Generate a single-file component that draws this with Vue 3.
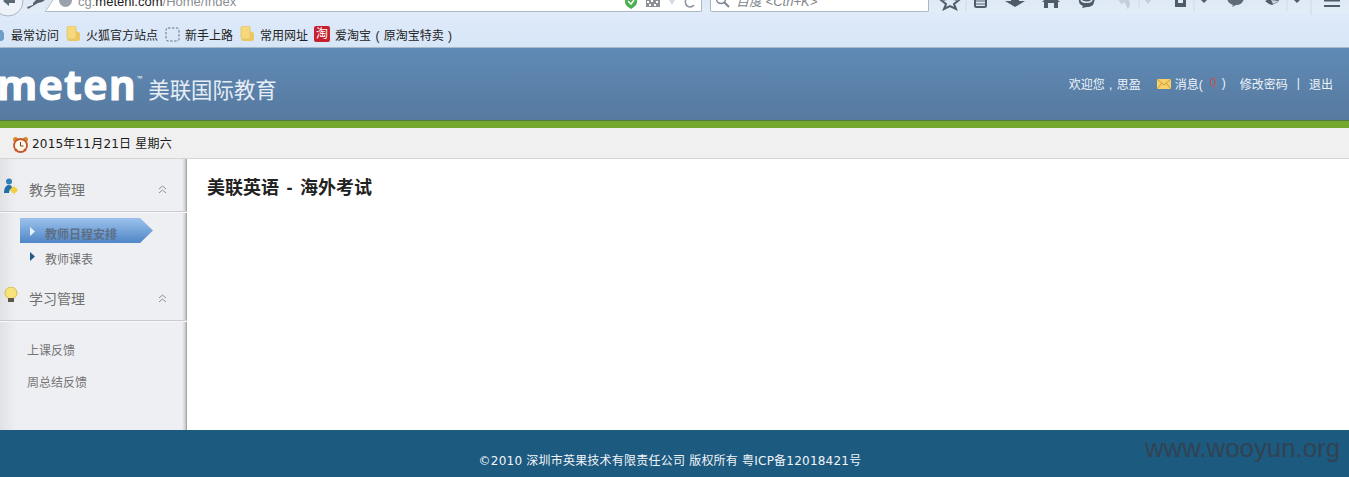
<script setup>
const bookmarks = [
  { label: '最常访问', icon: 'none' },
  { label: '火狐官方站点', icon: 'folder' },
  { label: '新手上路', icon: 'dash' },
  { label: '常用网址', icon: 'folder' },
  { label: '爱淘宝 ( 原淘宝特卖 )', icon: 'tao' }
]
</script>

<template>
  <div class="page">
    <div class="browser">
      <div class="navbar">
        <svg class="nav-back" width="60" height="20" viewBox="0 0 60 20">
          <path d="M45 0h8L45 12z" fill="#dfe9f5" />
          <path d="M53 0l-8 12" stroke="#b4c2d0" fill="none" />
          <circle cx="8" cy="1" r="15" fill="#eef3f9" stroke="#a8b6c5" />
          <path d="M3 1l6-5v3h6v4H9v3z" fill="#5c6a78" />
          <path d="M27 7l1 2 5-3 5-3 4-1 3-2h-9l-3 3v2z" fill="#59626c" />
        </svg>
        <div class="urlbar">
          <span class="globe"></span>
          <span class="url">cg.<b>meteni.com</b>/Home/Index</span>
          <svg class="url-icons" width="76" height="11" viewBox="0 0 76 11">
            <path d="M0 0h12v2c0 3-3 5-6 7-3-2-6-4-6-7z" fill="#4caf50" />
            <path d="M3 1l3 3 3-4" stroke="#fff" stroke-width="1.500" fill="none" />
            <rect x="21" y="0" width="14" height="7" fill="#8d9196" />
            <path d="M22 1h2v2h-2zM26 0h2v2h-2zM31 1h2v2h-2zM24 4h2v2h-2zM29 4h2v2h-2z" fill="#fff" />
            <path d="M44 0h6l-3 5z" fill="#d3d9e0" />
            <path d="M70 0a5 5 0 1 0-5 7 5 5 0 0 0 4-2" stroke="#8a949e" stroke-width="1.500" fill="none" />
          </svg>
        </div>
        <div class="searchbar">
          <svg width="14" height="8" viewBox="0 0 14 8">
            <circle cx="5" cy="-1" r="4.500" fill="none" stroke="#7b8794" stroke-width="1.500" />
            <path d="M8 2l5 5" stroke="#7b8794" stroke-width="2" />
          </svg>
          <span class="search-text">百度 &lt;Ctrl+K&gt;</span>
        </div>
        <svg class="tools" width="420" height="20" viewBox="0 0 420 20">
          <path d="M21 -8l3 7 6 1-5 4 2 5-6-3-6 3 2-5-5-4 6-1z" fill="none" stroke="#4f5b67" stroke-width="2" />
          <path d="M37 -3v14M210 -3v11M265 -3v14M358 -3v14" stroke="#d0dae5" />
          <path d="M382 -3v18" stroke="#cdd8e3" />
          <rect x="46" y="-4" width="11" height="11" rx="1.500" fill="none" stroke="#4f5b67" stroke-width="2" />
          <path d="M46 1h11M46 4h11" stroke="#4f5b67" />
          <path d="M82 -3h8v4h6l-10 6-10-6h6z" fill="#4f5b67" />
          <path d="M122 -6l9 8h-2v6h-4V3h-6v5h-4V2h-2z" fill="#4f5b67" />
          <path d="M150 1a8 7 0 1 1 15 1c0 3-3 5-7 5l-5 1 1-2c-3-1-4-3-4-5z" fill="#4f5b67" />
          <path d="M152 0c2 3 9 3 11 0" fill="none" stroke="#dbe7f5" stroke-width="1.500" />
          <path d="M188 -2l7-1c4 1 6 4 6 7 0 3-2 4-3 5 0-3-1-6-4-7l-1 3z" fill="#c3ced8" />
          <path d="M216 0h6l-3 4z" fill="#c3ced8" />
          <path d="M246 -2h3v5h5v-5h3v9h-11z" fill="#4f5b67" />
          <path d="M272 0h6l-3 3z" fill="#4f5b67" />
          <path d="M298 -3h17c0 5-3 8-8 8l-4 2 1-2c-3-1-6-3-6-8z" fill="#5f6b77" />
          <path d="M336 1l9-4 7-1-3 6-6 3-3-1z" fill="#4f5b67" />
          <path d="M342 0l8 1-6 3z" fill="#cbd4dc" />
          <path d="M365 0h6l-3 3z" fill="#4f5b67" />
          <path d="M395 0h16v1.500h-16zM395 5h16v2h-16z" fill="#4f5b67" />
        </svg>
      </div>
      <div class="bookmarks">
        <span v-for="b in bookmarks" :key="b.label" class="bm">
          <svg v-if="b.icon === 'none'" class="bm-icon first" width="4" height="16" viewBox="0 0 4 16">
            <path d="M-4 4h6l2 3v6l-2 2h-6z" fill="#6f9fc4" />
          </svg>
          <svg v-else-if="b.icon === 'folder'" class="bm-icon" width="15" height="16" viewBox="0 0 15 16">
            <path d="M1 2c0-1 1-2 2-2h6l1 1v12H3c-1 0-2-1-2-2z" fill="#f7d97c" stroke="#d8b657" stroke-width=".6" />
            <path d="M10 5l4 2v6c0 1-1 2-2 2H3c-1 0-2-1-2-2h9z" fill="#ecc760" />
          </svg>
          <svg v-else-if="b.icon === 'dash'" class="bm-icon" width="15" height="15" viewBox="0 0 15 15">
            <rect x="1" y="1" width="13" height="13" rx="2" fill="none" stroke="#67727e" stroke-dasharray="2.500 1.500" />
          </svg>
          <span v-else class="tao">淘</span>
          <span>{{ b.label }}</span>
        </span>
      </div>
    </div>

    <header class="header">
      <div class="brand">
        <span class="logo">meten<sup>™</sup></span>
        <span class="brand-cn">美联国际教育</span>
      </div>
      <div class="userbar">
        <span class="welcome">欢迎您 , 思盈</span>
        <span class="msg">
          <svg width="14" height="10" viewBox="0 0 14 10">
            <rect x="0" y="0" width="14" height="10" fill="#f7d067" />
            <path d="M0 0l7 6 7-6M0 10l5-6M14 10L9 4" fill="none" stroke="#c89a40" />
          </svg>
          <span class="msg-text">消息(</span><i class="count">0</i><span>)</span>
        </span>
        <span class="pwd">修改密码</span>
        <span class="sep">|</span>
        <span>退出</span>
      </div>
    </header>
    <div class="green"></div>

    <div class="datebar">
      <svg class="clock" width="17" height="17" viewBox="0 0 17 17">
        <circle cx="3.500" cy="3.500" r="2.500" fill="#d9892b" />
        <circle cx="13.500" cy="3.500" r="2.500" fill="#d9892b" />
        <circle cx="8.500" cy="9.500" r="6.500" fill="#fff6e8" stroke="#c5552c" stroke-width="1.800" />
        <path d="M8.500 6v4h3" fill="none" stroke="#6b4a2c" />
        <path d="M3 15l2-2M14 15l-2-2" stroke="#c5552c" stroke-width="1.500" />
      </svg>
      <span class="date-text">2015年11月21日 星期六</span>
    </div>

    <div class="body">
      <aside class="side">
        <div class="group-head">
          <svg class="gicon" width="16" height="17" viewBox="0 0 16 17">
            <circle cx="7" cy="3.500" r="3" fill="#2f80b8" />
            <path d="M2 15c0-5 2-8 5-8 2 0 3 1 3 3-2 1-3 3-3 5z" fill="#1f6ea8" />
            <circle cx="12" cy="12" r="3" fill="#f3cf3f" />
            <path d="M12 7.500v9M7.500 12h9" stroke="#f3cf3f" />
          </svg>
          <span class="gtitle">教务管理</span>
          <svg class="chev" width="9" height="9" viewBox="0 0 9 9">
            <path d="M1 4l3.500-3L8 4M1 8l3.500-3L8 8" fill="none" stroke="#8a9098" />
          </svg>
        </div>
        <div class="sub">
          <div class="item active">
            <svg class="tri" width="5" height="9" viewBox="0 0 5 9"><path d="M0 0l5 4.500L0 9z" fill="#e8f1fb" /></svg>
            <span>教师日程安排</span>
          </div>
          <div class="item">
            <svg class="tri" width="5" height="9" viewBox="0 0 5 9"><path d="M0 0l5 4.500L0 9z" fill="#1f5d86" /></svg>
            <span>教师课表</span>
          </div>
        </div>
        <div class="group-head">
          <svg class="gicon" width="16" height="17" viewBox="0 0 16 17">
            <circle cx="9" cy="6" r="6" fill="#f8e27a" stroke="#d9b84b" />
            <rect x="6" y="11" width="6" height="4" fill="#5d5548" />
          </svg>
          <span class="gtitle">学习管理</span>
          <svg class="chev" width="9" height="9" viewBox="0 0 9 9">
            <path d="M1 4l3.500-3L8 4M1 8l3.500-3L8 8" fill="none" stroke="#8a9098" />
          </svg>
        </div>
        <div class="plain">
          <div>上课反馈</div>
          <div>周总结反馈</div>
        </div>
      </aside>
      <main class="main">
        <h1>美联英语 - 海外考试</h1>
      </main>
    </div>

    <footer class="footer">
      <span class="copy">©2010 深圳市英果技术有限责任公司 版权所有 粤ICP备12018421号</span>
      <span class="mark">www.wooyun.org</span>
    </footer>
  </div>
</template>

<style>
html, body { margin: 0; padding: 0; background: #fff; overflow: hidden; }
</style>

<style scoped>
.page {
  width: 1349px;
  height: 477px;
  display: flex;
  flex-direction: column;
  overflow: hidden;
  font-family: "Liberation Sans", "Noto Sans CJK SC", sans-serif;
  font-size: 12px;
}
.browser {
  height: 48px;
  flex: none;
  background: #d9e7f7;
  border-bottom: 1px solid #a9b9cc;
  box-sizing: border-box;
  display: flex;
  flex-direction: column;
}
.navbar {
  height: 13px;
  flex: none;
  display: flex;
  align-items: flex-start;
  position: relative;
  z-index: 1;
  padding-left: 45px;
  background: linear-gradient(#dfe9f5, #e3edf8);
}
.nav-back { position: absolute; left: 0; top: 0; z-index: 2; }
.urlbar {
  width: 657px;
  height: 12px;
  flex: none;
  background: #fff;
  border: solid #a9b7c6;
  border-width: 0 1px 1px 0;
  border-radius: 0 0 2px 2px;
  display: flex;
  align-items: flex-end;
  padding-left: 14px;
  box-sizing: border-box;
  overflow: hidden;
}
.globe {
  width: 13px;
  height: 13px;
  border-radius: 50%;
  background: #9aa3ab;
  margin-bottom: 4px;
  flex: none;
}
.url {
  margin-left: 6px;
  font-size: 13px;
  line-height: 15px;
  margin-bottom: 2px;
  color: #8a8f95;
  white-space: nowrap;
}
.url b { font-weight: 400; color: #1c1c1c; }
.url-icons { margin-left: auto; flex: none; }
.searchbar {
  margin-left: 8px;
  width: 219px;
  height: 12px;
  flex: none;
  background: #fff;
  border: solid #a9b7c6;
  border-width: 0 1px 1px 1px;
  border-radius: 0 0 2px 2px;
  box-sizing: border-box;
  display: flex;
  align-items: flex-end;
  padding-left: 5px;
  overflow: hidden;
}
.searchbar svg { margin-bottom: 3px; flex: none; }
.search-text {
  margin-left: 6px;
  font-size: 13px;
  line-height: 14px;
  margin-bottom: 2px;
  font-style: italic;
  color: #7f8589;
  white-space: nowrap;
}
.tools { flex: none; overflow: visible; }
.bookmarks {
  flex: 1;
  display: flex;
  align-items: center;
  color: #222;
  font-size: 12px;
  background: linear-gradient(#dfeafa, #d7e6f7);
  padding-top: 8px;
}
.bm { display: flex; align-items: center; white-space: pre; margin-right: 7px; word-spacing: 1px; }
.bm-icon { margin-right: 5px; flex: none; }
.bm-icon.first { margin-right: 7px; }
.tao {
  width: 16px;
  height: 16px;
  background: #c8202f;
  color: #fff;
  border-radius: 2px;
  font-size: 12px;
  line-height: 16px;
  text-align: center;
  margin: 0 5px 0 -1px;
  flex: none;
}
.header {
  height: 73px;
  flex: none;
  background: linear-gradient(#5f8ab5, #577aa0);
  border-bottom: 1px solid #4f7d3a;
  box-sizing: border-box;
  display: flex;
  align-items: center;
  justify-content: space-between;
  color: #fff;
}
.brand { display: flex; align-items: center; margin-top: 14px; }
.logo {
  font-family: "Open Sans", "Liberation Sans", sans-serif;
  font-size: 41px;
  font-weight: 700;
  line-height: 44px;
  margin-left: -3px;
  letter-spacing: 1.300px;
  -webkit-text-stroke: 1px #fff;
  position: relative;
  top: -7px;
}
.logo sup {
  font-size: 7px;
  -webkit-text-stroke: 0;
  letter-spacing: 0;
  vertical-align: 19px;
  line-height: 0;
  font-weight: 400;
}
.brand-cn { font-size: 21.4px; margin-left: 6px; color: #e6edf5; line-height: 24px; }
.userbar {
  display: flex;
  align-items: center;
  margin: 0 16px 2px 0;
  font-size: 12px;
  color: #eef3f8;
  white-space: nowrap;
}
.welcome { word-spacing: 1px; }
.msg { display: flex; align-items: center; margin-left: 16px; }
.msg svg { margin-right: 4px; margin-top: 2px; }
.count { font-style: normal; color: #c0564e; margin: 0 5.500px 0 7px; }
.pwd { margin-left: 14px; }
.sep { margin: 0 9px; }
.green { height: 7px; flex: none; background: #75a62e; }
.datebar {
  height: 31px;
  flex: none;
  background: #f0f0f0;
  border-bottom: 1px solid #d5d5d5;
  box-sizing: border-box;
  display: flex;
  align-items: center;
  padding-left: 12px;
  color: #1a1a1a;
  font-size: 12px;
  letter-spacing: .2px;
  font-family: "DejaVu Sans", "Noto Sans CJK SC", sans-serif;
}
.date-text { margin-bottom: 2px; }
.clock { margin-right: 3px; margin-top: 3px; flex: none; }
.body { flex: 1; display: flex; min-height: 0; }
.side {
  width: 187px;
  flex: none;
  box-sizing: border-box;
  background: linear-gradient(90deg, #e1e2e4, #eeeff3 16px, #eeeff3 182px, #d2d3d6 185px, #9a9a9a 187px);
  color: #6b6b6b;
}
.group-head {
  height: 53px;
  padding-top: 8px;
  box-sizing: border-box;
  display: flex;
  align-items: center;
  position: relative;
  border-bottom: 1px solid #c9cbce;
  box-shadow: 0 1px 0 #f8f8fa;
}
.gicon { position: absolute; left: 2px; top: 19px; }
.gtitle { margin-left: 29px; font-size: 14px; color: #6f6f6f; }
.chev { position: absolute; left: 158px; top: 26px; }
.sub { padding-top: 6px; }
.item {
  height: 25px;
  padding-top: 10px;
  display: flex;
  align-items: center;
  font-size: 12px;
  line-height: 17px;
  position: relative;
  width: 133px;
  margin-left: 20px;
  box-sizing: border-box;
  padding-left: 25px;
  color: #6f6f6f;
}
.item .tri { position: absolute; left: 10px; top: 9px; }
.active {
  background: linear-gradient(#9cc2ec, #4f86c6);
  clip-path: polygon(0 0, 120px 0, 133px 12.500px, 120px 25px, 0 25px);
  font-weight: 700;
  color: #5d6f86;
}
.plain { padding: 14px 0 0 27px; font-size: 12px; color: #757575; }
.plain div { height: 32px; line-height: 32px; }
.main { flex: 1; background: #fff; padding: 17px 20px; }
h1 {
  margin: 0;
  font-size: 18px;
  line-height: 25px;
  font-weight: 700;
  color: #222;
  word-spacing: 2.500px;
}
.footer {
  height: 47px;
  flex: none;
  background: #1d5a80;
  color: #f2f5f8;
  font-size: 12px;
  letter-spacing: .22px;
  font-family: "DejaVu Sans", "Noto Sans CJK SC", sans-serif;
  display: flex;
  align-items: center;
  justify-content: center;
  position: relative;
  padding-top: 11px;
  box-sizing: border-box;
}
.copy { margin-right: 9px; }
.mark {
  position: absolute;
  right: 9px;
  top: 3px;
  font-family: "Liberation Sans", sans-serif;
  font-size: 25.800px;
  line-height: 30px;
  letter-spacing: 0;
  color: #353f4b;
  opacity: .85;
}
</style>
